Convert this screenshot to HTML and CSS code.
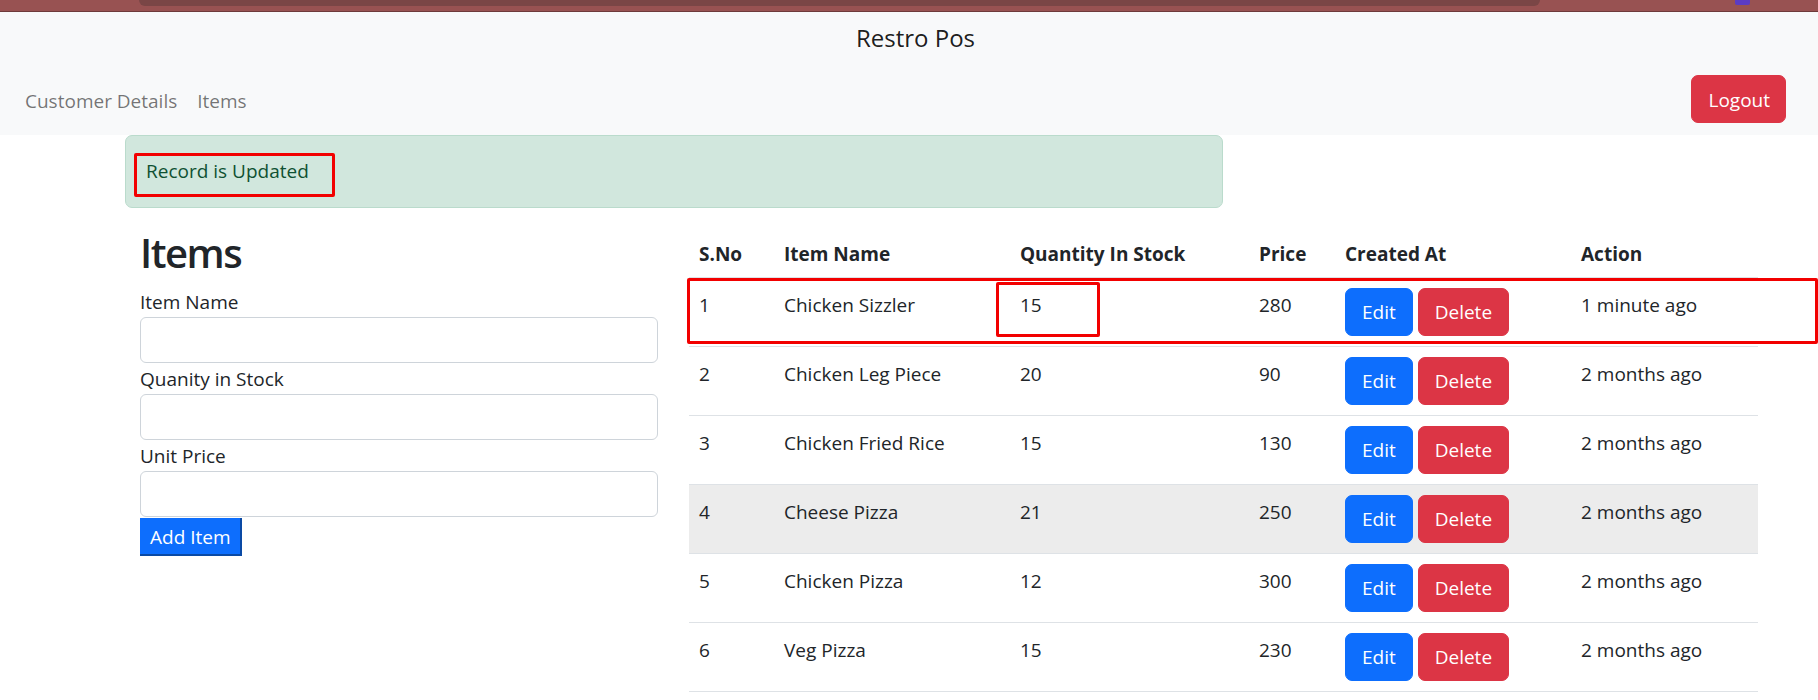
FILE: index.html
```html
<!DOCTYPE html>
<html lang="en">
<head>
<meta charset="utf-8">
<title>Restro Pos</title>
<link rel="stylesheet" href="styles.css">
</head>
<body>
<div class="chrome"><div class="chrome-pill"></div><div class="chrome-badge"></div></div>
<nav class="navbar">
  <div class="brand-row"><a class="brand" href="#">Restro Pos</a></div>
  <div class="nav-row">
    <ul class="nav-links">
      <li><a href="#">Customer Details</a></li>
      <li><a href="#">Items</a></li>
    </ul>
    <button class="btn btn-danger logout" type="button">Logout</button>
  </div>
</nav>
<div class="alert">Record is Updated<span class="mark mark-alert"></span></div>
<main class="content">
  <section class="form-col">
    <h2 class="title">Items</h2>
    <form class="item-form">
      <label class="field-label">Item Name</label>
      <input class="field-input" type="text">
      <label class="field-label">Quanity in Stock</label>
      <input class="field-input" type="text">
      <label class="field-label">Unit Price</label>
      <input class="field-input" type="text">
      <button class="add-btn" type="button">Add Item</button>
    </form>
  </section>
  <section class="table-col">
    <table class="items-table">
      <colgroup>
        <col class="c-sno"><col class="c-name"><col class="c-qty"><col class="c-price"><col class="c-created"><col class="c-action">
      </colgroup>
      <thead>
        <tr><th>S.No</th><th>Item Name</th><th>Quantity In Stock</th><th>Price</th><th>Created At</th><th>Action</th></tr>
      </thead>
      <tbody>
        <tr><td>1</td><td>Chicken Sizzler</td><td>15</td><td>280</td><td class="btn-cell"><button class="btn btn-primary">Edit</button> <button class="btn btn-danger">Delete</button></td><td>1 minute ago</td></tr>
        <tr><td>2</td><td>Chicken Leg Piece</td><td>20</td><td>90</td><td class="btn-cell"><button class="btn btn-primary">Edit</button> <button class="btn btn-danger">Delete</button></td><td>2 months ago</td></tr>
        <tr><td>3</td><td>Chicken Fried Rice</td><td>15</td><td>130</td><td class="btn-cell"><button class="btn btn-primary">Edit</button> <button class="btn btn-danger">Delete</button></td><td>2 months ago</td></tr>
        <tr class="hover"><td>4</td><td>Cheese Pizza</td><td>21</td><td>250</td><td class="btn-cell"><button class="btn btn-primary">Edit</button> <button class="btn btn-danger">Delete</button></td><td>2 months ago</td></tr>
        <tr><td>5</td><td>Chicken Pizza</td><td>12</td><td>300</td><td class="btn-cell"><button class="btn btn-primary">Edit</button> <button class="btn btn-danger">Delete</button></td><td>2 months ago</td></tr>
        <tr><td>6</td><td>Veg Pizza</td><td>15</td><td>230</td><td class="btn-cell"><button class="btn btn-primary">Edit</button> <button class="btn btn-danger">Delete</button></td><td>2 months ago</td></tr>
      </tbody>
    </table>
    <span class="mark mark-row"></span>
    <span class="mark mark-qty"></span>
  </section>
</main>
</body>
</html>
```

FILE: styles.css
```css
* { box-sizing: border-box; }

html, body {
  margin: 0;
  padding: 0;
  background: #ffffff;
}

body {
  font-family: "Open Sans", "Noto Sans", sans-serif;
  font-size: 19px;
  line-height: 30px;
  color: #212529;
  width: 1818px;
  overflow: hidden;
}

/* top browser strip */
.chrome {
  height: 12px;
  background: #985252;
  border-bottom: 1px solid #6e3a3a;
  display: flex;
  align-items: flex-start;
}
.chrome-pill {
  margin-left: 139px;
  width: 1401px;
  height: 6px;
  background: #7a4646;
  border-radius: 0 0 6px 6px;
}
.chrome-badge {
  margin-left: 195px;
  width: 15px;
  height: 5px;
  background: #5b3cc4;
  border-radius: 0 0 2px 2px;
}

/* navbar */
.navbar {
  background: #f8f9fa;
  height: 123px;
  padding: 0 32px 0 15px;
}
.brand-row {
  height: 52px;
  display: flex;
  justify-content: center;
  align-items: center;
  padding-left: 30px;
}
.brand {
  font-size: 24px;
  color: rgba(0, 0, 0, 0.9);
  text-decoration: none;
}
.nav-row {
  margin-top: 11px;
  height: 48px;
  display: flex;
  align-items: center;
  justify-content: space-between;
}
.nav-links {
  list-style: none;
  margin: 0;
  padding: 4px 0 0 0;
  display: flex;
}
.nav-links a {
  display: block;
  padding: 0 10px;
  color: rgba(0, 0, 0, 0.55);
  text-decoration: none;
}

/* buttons */
.btn {
  font-family: inherit;
  font-size: 19px;
  line-height: 30px;
  height: 47px;
  padding: 0 16px;
  border: 1px solid transparent;
  border-radius: 7px;
  color: #ffffff;
  cursor: pointer;
  vertical-align: top;
}
.btn-primary { background: #0d6efd; border-color: #0d6efd; }
.btn-danger { background: #dc3545; border-color: #dc3545; }
.logout { height: 48px; padding: 2px 15px 0 16px; }

/* alert */
.alert {
  position: relative;
  margin-left: 125px;
  width: 1098px;
  height: 73px;
  padding: 20px 20px;
  background: #d1e7dd;
  border: 1px solid #badbcc;
  border-radius: 7px;
  color: #0f5132;
}

/* annotations */
.mark {
  position: absolute;
  border: 3px solid #f20000;
  border-radius: 2px;
  pointer-events: none;
}
.mark-alert { left: 8px; top: 17px; width: 201px; height: 44px; }
.mark-row { left: -2px; top: 51px; width: 1131px; height: 66px; }
.mark-qty { left: 307px; top: 55px; width: 104px; height: 55px; }

/* main content */
.content {
  display: flex;
  align-items: flex-start;
  padding: 19px 0 0 140px;
  gap: 31px;
}
.form-col {
  width: 518px;
  flex: none;
}
.title {
  font-size: 40px;
  font-weight: 600;
  letter-spacing: -1.5px;
  line-height: 48px;
  margin: 2px 0 9px 0;
}
.item-form {
  display: flex;
  flex-direction: column;
  align-items: flex-start;
}
.field-label {
  display: block;
  line-height: 30px;
  padding-top: 1px;
}
.field-input {
  display: block;
  width: 100%;
  height: 46px;
  border: 1px solid #ced4da;
  border-radius: 6px;
  background: #ffffff;
  font: inherit;
  padding: 0 15px;
}
.add-btn {
  margin-top: 1px;
  height: 38px;
  padding: 1px 9px 0 10px;
  font-family: inherit;
  font-size: 19px;
  line-height: 30px;
  color: #ffffff;
  background: #0d6efd;
  border: none;
  border-right: 2px solid #0a4aa5;
  border-bottom: 2px solid #0a4aa5;
  border-radius: 0;
}

/* table */
.table-col {
  position: relative;
  width: 1069px;
  flex: none;
}
.items-table {
  width: 1069px;
  table-layout: fixed;
  border-collapse: collapse;
}
.c-sno { width: 85px; }
.c-name { width: 236px; }
.c-qty { width: 239px; }
.c-price { width: 86px; }
.c-created { width: 236px; }
.c-action { width: 187px; }
.items-table th,
.items-table td {
  padding: 12px 10px 8px 10px;
  text-align: left;
  vertical-align: top;
  border-bottom: 1px solid #dee2e6;
  white-space: nowrap;
}
.items-table th {
  font-weight: 700;
}
.items-table td.btn-cell {
  padding-top: 10px;
  padding-bottom: 10px;
}
.items-table tr.hover td {
  background: #ececec;
}
.items-table td .btn {
  height: 48px;
}
```
